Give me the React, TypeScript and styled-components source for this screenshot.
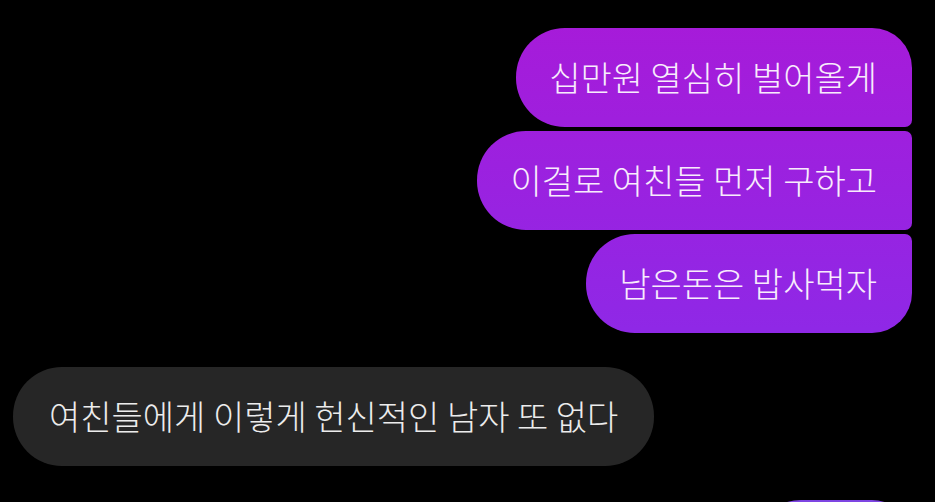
import styled, { createGlobalStyle, css } from "styled-components";

const GlobalStyle = createGlobalStyle`
  html, body {
    margin: 0;
    padding: 0;
    background: #000;
    overflow: hidden;
  }
  body {
    font-family: "Noto Sans CJK KR", "Noto Sans", sans-serif;
  }
`;

type Pos = "first" | "middle" | "last" | "single";

const messages: { text: string; mine: boolean; pos: Pos; width?: number }[] = [
  { text: "십만원 열심히 벌어올게", mine: true, pos: "first" },
  { text: "이걸로 여친들 먼저 구하고", mine: true, pos: "middle" },
  { text: "남은돈은 밥사먹자", mine: true, pos: "last" },
  { text: "여친들에게 이렇게 헌신적인 남자 또 없다", mine: false, pos: "single" },
  // next message, only its top edge shows at the bottom of the screen
  { text: "", mine: true, pos: "first", width: 160 },
];

const App = () => {
  // group consecutive messages from the same side
  const groups: (typeof messages)[] = [];
  messages.forEach((m) => {
    const last = groups[groups.length - 1];
    if (last && last[0].mine === m.mine) last.push(m);
    else groups.push([m]);
  });

  return (
    <>
      <GlobalStyle />
      <Screen>
        {groups.map((group, i) => (
          <Group key={i} $mine={group[0].mine}>
            {group.map((m, j) => (
              <Bubble
                key={j}
                $mine={m.mine}
                $pos={m.pos}
                style={m.width ? { width: m.width } : undefined}
              >
                {m.text}
              </Bubble>
            ))}
          </Group>
        ))}
      </Screen>
    </>
  );
};

const Screen = styled.div`
  height: 502px;
  padding: 28px 23px 0 13px;
  box-sizing: border-box;
  display: flex;
  flex-direction: column;
  gap: 34px;
  background: #000;
  overflow: hidden;
`;

const Group = styled.div<{ $mine: boolean }>`
  display: flex;
  flex-direction: column;
  align-items: ${(p) => (p.$mine ? "flex-end" : "flex-start")};
  gap: 4px;
`;

const big = "49px";
const small = "7px";

const Bubble = styled.div<{ $mine: boolean; $pos: Pos }>`
  flex: none;
  height: 99px;
  box-sizing: border-box;
  display: flex;
  align-items: center;
  padding: 0 35px 2px 33px;
  font-size: 34px;
  font-weight: 300;
  line-height: 40px;
  white-space: nowrap;
  ${(p) =>
    p.$mine
      ? css`
          color: #f8ecfc;
          background: linear-gradient(180deg, #a81ad8 0px, #8f28e6 330px, #7d45e2 502px);
          background-attachment: fixed;
          border-radius: ${big}
            ${p.$pos === "first" || p.$pos === "single" ? "40px" : small}
            ${p.$pos === "last" || p.$pos === "single" ? "40px" : small} ${big};
        `
      : css`
          color: #ececec;
          background: #262626;
          border-radius: ${big};
          padding: 0 36px 2px 36px;
        `}
`;

export default App;
